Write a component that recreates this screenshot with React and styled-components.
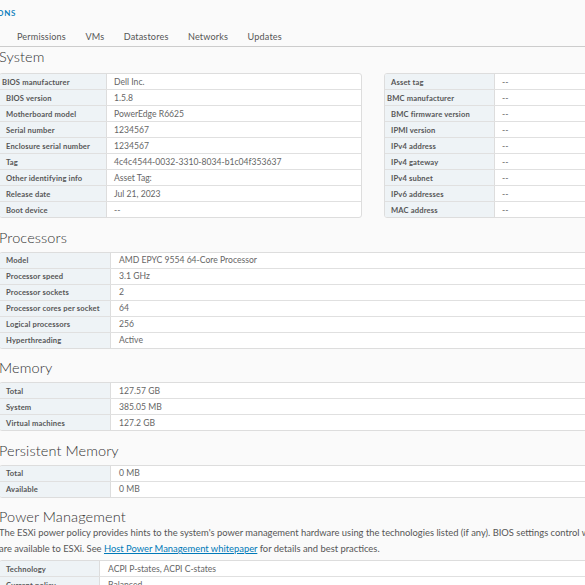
import React from "react";
import styled, { createGlobalStyle } from "styled-components";

const Global = createGlobalStyle`
  html, body { margin: 0; padding: 0; background: #fafafa; overflow: hidden; }
  body { font-family: "Lato", "Open Sans", sans-serif; color: #565656; }
`;

const Page = styled.div`
  width: 760px;
  margin-left: -1px;
`;

const TopBar = styled.div`
  height: 26px;
  display: flex;
  align-items: center;
  font-size: 8px;
  font-weight: 600;
  letter-spacing: 0.6px;
  color: #0079b8;
  margin-left: -22px;
`;

const Tabs = styled.nav`
  display: flex;
  gap: 19.5px;
  height: 20px;
  align-items: center;
  padding-left: 18px;
  border-bottom: 1px solid #cccccc;
  font-size: 9.1px;
  color: #565656;
  letter-spacing: 0.15px;
`;

const Tab = styled.span`
  line-height: 20px;
  padding-top: 1px;
`;

const Heading = styled.h2`
  margin: ${(p) => p.$mt ?? 9.5}px 0 ${(p) => p.$mb ?? 4}px;
  font-size: 14.5px;
  font-weight: 300;
  line-height: 20px;
  color: #333;
  letter-spacing: 0.1px;
`;

const Columns = styled.div`
  display: flex;
  gap: 22px;
  align-items: flex-start;
`;

const Table = styled.div`
  width: ${(p) => p.$w}px;
  border: 1px solid #dddddd;
  border-radius: 3px;
  background: #fff;
  overflow: hidden;
`;

const Row = styled.div`
  display: grid;
  grid-template-columns: ${(p) => p.$lw}px 1fr;
  height: 15px;
  border-top: 1px solid #e0e0e0;
  &:first-child { border-top: none; }
`;

const Label = styled.div`
  background: #eef3f6;
  border-right: 1px solid #dddddd;
  padding-left: ${(p) => (p.$tight ? 2 : 6)}px;
  font-size: 7.6px;
  font-weight: 700;
  color: #565656;
  display: flex;
  align-items: center;
  white-space: nowrap;
  letter-spacing: 0.15px;
`;

const Value = styled.div`
  padding-left: ${(p) => p.$pl || 7}px;
  font-size: 8.6px;
  color: #666;
  display: flex;
  align-items: center;
  white-space: nowrap;
`;

const Para = styled.p`
  margin: -2px 0 3px;
  font-size: 9.4px;
  line-height: 16px;
  color: #565656;
  width: 668px;
`;

const Link = styled.a`
  color: #0079b8;
  text-decoration: underline;
`;

function InfoTable({ rows, w, lw, pl }) {
  return (
    <Table $w={w}>
      {rows.map(([k, v, tight]) => (
        <Row key={k} $lw={lw}>
          <Label $tight={tight}>{k}</Label>
          <Value $pl={pl}>{v}</Value>
        </Row>
      ))}
    </Table>
  );
}

const systemLeft = [
  ["BIOS manufacturer", "Dell Inc.", true],
  ["BIOS version", "1.5.8"],
  ["Motherboard model", "PowerEdge R6625"],
  ["Serial number", "1234567"],
  ["Enclosure serial number", "1234567"],
  ["Tag", "4c4c4544-0032-3310-8034-b1c04f353637"],
  ["Other identifying info", "Asset Tag:"],
  ["Release date", "Jul 21, 2023"],
  ["Boot device", "--"],
];

const systemRight = [
  ["Asset tag", "--"],
  ["BMC manufacturer", "--", true],
  ["BMC firmware version", "--"],
  ["IPMI version", "--"],
  ["IPv4 address", "--"],
  ["IPv4 gateway", "--"],
  ["IPv4 subnet", "--"],
  ["IPv6 addresses", "--"],
  ["MAC address", "--"],
];

const processors = [
  ["Model", "AMD EPYC 9554 64-Core Processor"],
  ["Processor speed", "3.1 GHz"],
  ["Processor sockets", "2"],
  ["Processor cores per socket", "64"],
  ["Logical processors", "256"],
  ["Hyperthreading", "Active"],
];

const memory = [
  ["Total", "127.57 GB"],
  ["System", "385.05 MB"],
  ["Virtual machines", "127.2 GB"],
];

const pmem = [
  ["Total", "0 MB"],
  ["Available", "0 MB"],
];

const power = [
  ["Technology", "ACPI P-states, ACPI C-states"],
  ["Current policy", "Balanced"],
];

export default function App() {
  return (
    <Page>
      <Global />
      <TopBar>ACTIONS</TopBar>
      <Tabs>
        <Tab>Permissions</Tab>
        <Tab>VMs</Tab>
        <Tab>Datastores</Tab>
        <Tab>Networks</Tab>
        <Tab>Updates</Tab>
      </Tabs>
      <Heading $mt={0} $mb={6}>System</Heading>
      <Columns>
        <InfoTable rows={systemLeft} w={361} lw={107} pl={7} />
        <InfoTable rows={systemRight} w={330} lw={110} pl={7} />
      </Columns>
      <Heading>Processors</Heading>
      <InfoTable rows={processors} w={740} lw={111} pl={8} />
      <Heading>Memory</Heading>
      <InfoTable rows={memory} w={740} lw={111} pl={8} />
      <Heading>Persistent Memory</Heading>
      <InfoTable rows={pmem} w={740} lw={111} pl={8} />
      <Heading $mb={0}>Power Management</Heading>
      <Para>
        The ESXi power policy provides hints to the system's power management hardware using the
        technologies listed (if any). BIOS settings control which technologies are available to ESXi. See{" "}
        <Link>Host Power Management whitepaper</Link> for details and best practices.
      </Para>
      <InfoTable rows={power} w={740} lw={100} pl={8} />
    </Page>
  );
}
